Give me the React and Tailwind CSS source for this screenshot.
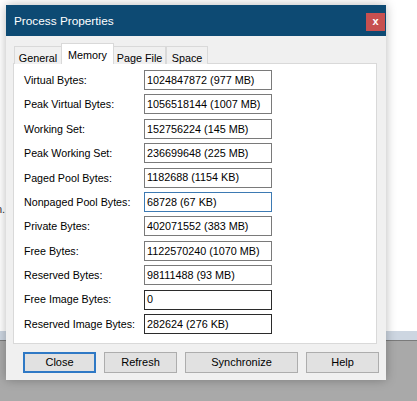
import React from 'react';

const rows = [
  ['Virtual Bytes:', '1024847872 (977 MB)', 'normal'],
  ['Peak Virtual Bytes:', '1056518144 (1007 MB)', 'normal'],
  ['Working Set:', '152756224 (145 MB)', 'normal'],
  ['Peak Working Set:', '236699648 (225 MB)', 'normal'],
  ['Paged Pool Bytes:', '1182688 (1154 KB)', 'normal'],
  ['Nonpaged Pool Bytes:', '68728 (67 KB)', 'focus'],
  ['Private Bytes:', '402071552 (383 MB)', 'normal'],
  ['Free Bytes:', '1122570240 (1070 MB)', 'normal'],
  ['Reserved Bytes:', '98111488 (93 MB)', 'normal'],
  ['Free Image Bytes:', '0', 'dark'],
  ['Reserved Image Bytes:', '282624 (276 KB)', 'dark'],
];

const tabs = ['General', 'Memory', 'Page File', 'Space'];
const tabWidths = { General: 'w-[48px]', Memory: 'w-[53px]', 'Page File': 'w-[53px]', Space: 'w-[42px]' };

const borderFor = {
  normal: 'border-[#7a7a7a]',
  focus: 'border-[#3d7ab3]',
  dark: 'border-[#2b2b2b]',
};

const Btn = ({ children, w, focused }) => (
  <button
    className={`${w} h-[21px] bg-[#e1e1e1] text-[11px] text-black ${focused ? 'border-2 border-[#2f79c5]' : 'border border-[#adadad]'}`}
  >
    {children}
  </button>
);

export default function App() {
  return (
    <div className="relative w-[417px] h-[401px] overflow-hidden bg-white" style={{ fontFamily: '"Liberation Sans", Arial, sans-serif' }}>
      {/* desktop behind */}
      <div className="flex flex-col h-full">
        <div className="h-[331px] bg-white relative">
          <span className="absolute left-[-4px] top-[201px] text-[11px] text-[#333]">n.</span>
        </div>
        <div className="h-[9px] bg-[#cdd6e1]"></div>
        <div className="h-[1px] bg-[#7b7b7b]"></div>
        <div className="flex-1 bg-[#a9a9a9]"></div>
      </div>

      {/* dialog window */}
      <div className="absolute left-[6px] top-[5px] w-[380px] h-[375px] bg-[#f0f0f0] flex flex-col shadow-[0_0_10px_rgba(0,0,0,0.28)]">
        <div className="h-[31px] bg-[#0d4a73] flex items-start justify-between pl-[8px]">
          <span className="text-white text-[11.8px] mt-[9px] leading-[14px]">Process Properties</span>
          <div className="w-[19px] h-[18px] mt-[8px] mr-[1px] bg-[#c75050] flex items-center justify-center text-white text-[11px] font-bold leading-none pb-[2px]">x</div>
        </div>

        <div className="pl-[7px] pr-[9px] pt-[7px]">
          <div className="flex items-end h-[21px] pl-[1px] relative z-10">
            {tabs.map(t =>
              t === 'Memory' ? (
                <div key={t} className={`${tabWidths[t]} h-[21px] -mx-[1px] bg-white border border-b-0 border-[#d9d9d9] text-[10.8px] text-black flex items-start justify-center pt-[3px]`}>
                  {t}
                </div>
              ) : (
                <div key={t} className={`${tabWidths[t]} h-[18px] bg-[#f0f0f0] border border-b-0 border-[#d9d9d9] text-[10.8px] text-black flex items-start justify-center pt-[3px]`}>
                  {t}
                </div>
              )
            )}
          </div>
          <div className="-mt-[1px] h-[281px] bg-white border border-[#d9d9d9] pl-[10px] pt-[6px] flex flex-col gap-[4.4px]">
            {rows.map(([label, value, kind]) => (
              <div key={label} className="flex items-center h-[20px]">
                <span className="w-[120px] text-[10.7px] text-black">{label}</span>
                <div className={`w-[128px] h-[20px] border ${borderFor[kind]} bg-white text-[10.8px] text-black pl-[2px] flex items-center`}>
                  {value}
                </div>
              </div>
            ))}
          </div>
        </div>

        <div className="flex gap-[8px] pl-[17px] mt-[8px]">
          <Btn w="w-[73px]" focused>Close</Btn>
          <Btn w="w-[73px]">Refresh</Btn>
          <Btn w="w-[113px]">Synchronize</Btn>
          <Btn w="w-[73px]">Help</Btn>
        </div>
      </div>
    </div>
  );
}
